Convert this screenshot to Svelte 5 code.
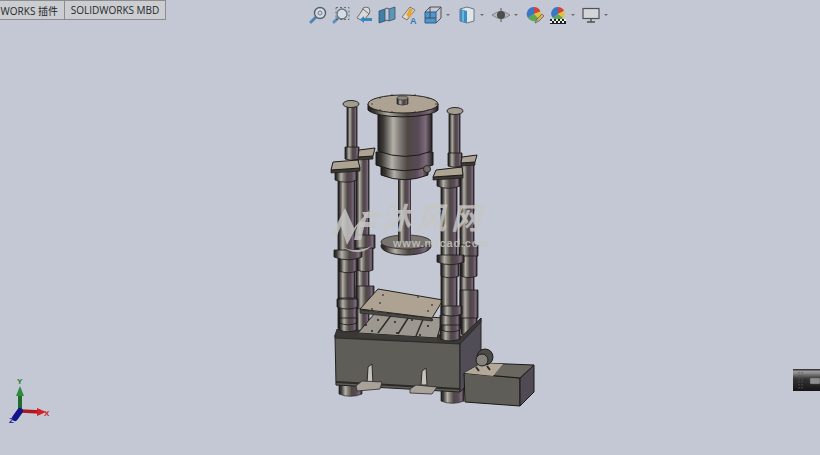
<script>
  // cylinder segments of the press: x, y, w, h
  const columns = [
    // back left
    [356, 157, 13, 180], [354, 235, 21, 13], [357, 248, 16, 22], [356, 286, 18, 22],
    // back right
    [460, 163, 14, 165], [459, 245, 19, 11], [461, 256, 16, 20], [460, 290, 18, 28], [461, 318, 16, 16],
    // upper rods
    [347, 107, 10, 42], [345, 147, 14, 12], [449, 114, 11, 42], [448, 153, 14, 13],
    // front left
    [338, 178, 17, 150], [335, 170, 22, 10], [339, 258, 18, 13], [339, 298, 18, 32],
    // front right
    [441, 185, 16, 140], [437, 176, 23, 10], [441, 263, 18, 13], [440, 315, 20, 24]
  ];
  const flanges = [
    [334, 250, 28, 7], [437, 255, 27, 7], [337, 299, 21, 8], [441, 306, 21, 8], [339, 318, 18, 5], [441, 325, 19, 5]
  ];
  // column-head blocks: top face, then the dark front lip
  const blocks = [
    ['359,150 375,148 373,156 358,157', '358,157 373,156 373,159 358,160'],
    ['462,157 477,155 475,162 461,163', '461,163 475,162 475,165 461,166'],
    ['333,162 358,160 360,168 331,170', '331,170 360,168 360,171 331,173'],
    ['436,170 462,167 463,175 433,177', '433,177 463,175 463,178 433,180']
  ];
  const bolts = [[372, 104], [380, 98], [392, 95], [415, 95], [428, 98], [436, 104], [428, 110], [415, 112], [392, 112], [380, 110]];
  const tableHoles = [[383, 295], [418, 297], [432, 305], [380, 303], [428, 311], [372, 309]];

  const cyl = (x, y, w, h) =>
    `M${x} ${y}L${x} ${y + h}Q${x + w / 2} ${y + h + w * 0.2} ${x + w} ${y + h}L${x + w} ${y}Z`;
</script>

<div class="page">
  <header class="topbar">
    <div class="tabs">
      <div class="tab first">WORKS 插件</div>
      <div class="tab">SOLIDWORKS MBD</div>
    </div>
    <div class="tools">
      <!-- zoom to fit -->
      <svg class="icon" viewBox="0 0 18 18"><path d="M7 11 2 16" stroke="#4f86b5" stroke-width="3" stroke-linecap="round"/><circle cx="11" cy="7" r="5.5" fill="#d5dbe0" stroke="#53626e" stroke-width="1.4"/><circle cx="11" cy="7" r="2" fill="none" stroke="#6d7a86"/></svg>
      <!-- zoom to area -->
      <svg class="icon" viewBox="0 0 18 18"><path d="M6 12 2 16" stroke="#5d8eb8" stroke-width="3" stroke-linecap="round"/><circle cx="10" cy="8" r="5" fill="#d5dde4" stroke="#66747f" stroke-width="1.3"/><rect x="4" y="1.5" width="13" height="12" fill="none" stroke="#555" stroke-dasharray="2 2" stroke-width=".8"/></svg>
      <!-- previous view -->
      <svg class="icon" viewBox="0 0 18 18"><circle cx="11" cy="5" r="4" fill="#d8dadc" stroke="#6b6f73"/><path d="M2 12 8 3l6 5-6 7Z" fill="#d8dadc" stroke="#6b6f73"/><path d="M9 12h8v3H9v2l-4-3.500L9 10Z" fill="#3c86c0"/></svg>
      <!-- section view -->
      <svg class="icon" viewBox="0 0 18 18"><path d="M1 5 7 3v12l-6 2Z" fill="#3f7fa5" stroke="#33566e" stroke-width=".8"/><path d="M11 3l6-2v12l-6 2Z" fill="#5f96b5" stroke="#33566e" stroke-width=".8"/><path d="M7 3q2-2 4 0M7 15q2-2 4 0" fill="none" stroke="#555"/></svg>
      <!-- dynamic annotation -->
      <svg class="icon" viewBox="0 0 18 18"><path d="M1 11 9 1l5 3-8 10Z" fill="#d9dadb" stroke="#777"/><path d="M5 9l4-7 3 2-2 3 2 1-6 5 1-3Z" fill="#e9a52e"/><text x="9" y="17.500" class="glyph">A</text></svg>
      <!-- view orientation -->
      <svg class="icon" viewBox="0 0 18 18"><path d="M1 6h11v11H1Z" fill="#4f96cc" stroke="#2d5f86"/><path d="M1 6l5-5h11v11l-5 5M12 6l5-5M6 1v11H1m5 0 6 0" fill="none" stroke="#444" stroke-width=".9"/></svg>
      <span class="caret"></span>
      <!-- display style -->
      <svg class="icon gap" viewBox="0 0 18 18"><path d="M2 3l7-2 7 2v12l-7 2-7-2Z" fill="#dfe6ea" stroke="#6b7680"/><path d="M2 3l7 2v12l-7-2Z" fill="#3f8cc0"/><path d="M5 4.500v11" stroke="#7fc0e6" stroke-width="1.500"/></svg>
      <span class="caret"></span>
      <!-- hide/show -->
      <svg class="icon gap" viewBox="0 0 18 18"><path d="M0 9q9-7 18 0-9 7-18 0Z" fill="#b5b9bd" stroke="#777" stroke-width=".8"/><circle cx="9" cy="9" r="4" fill="#4a4c4e"/><path d="M9 2v14" stroke="#555"/></svg>
      <span class="caret"></span>
      <!-- edit appearance -->
      <svg class="icon gap" viewBox="0 0 18 18"><path d="M8 8 8 1a7 7 0 0 1 6.500 4.500Z" fill="#d0443c"/><path d="M8 8 14.500 5.500A7 7 0 0 1 13 13Z" fill="#e3c23a"/><path d="M8 8 13 13A7 7 0 0 1 2 12Z" fill="#5aa94e"/><path d="M8 8 2 12A7 7 0 0 1 8 1Z" fill="#3a78c4"/><path d="M9 17l2-4 5-5 2 2-5 5Z" fill="#d8b060" stroke="#555" stroke-width=".7"/></svg>
      <!-- apply scene -->
      <svg class="icon" viewBox="0 0 18 18"><path d="M9 8 9 1a6.500 6.500 0 0 1 6 4Z" fill="#d0443c"/><path d="M9 8 15 5a6.500 6.500 0 0 1-1 7Z" fill="#e3c23a"/><path d="M9 8 14 12a6.500 6.500 0 0 1-10 0Z" fill="#5aa94e"/><path d="M9 8 4 12A6.500 6.500 0 0 1 9 1Z" fill="#3a78c4"/><path d="M1 13h16v5H1Z" fill="#1f1f1f"/><path d="M3 13h2v2H3ZM7 13h2v2H7ZM11 13h2v2h-2ZM15 13h2v2h-2ZM1 15h2v2H1ZM5 15h2v2H5ZM9 15h2v2H9ZM13 15h2v2h-2Z" fill="#eee"/></svg>
      <span class="caret"></span>
      <!-- view settings -->
      <svg class="icon monitor" viewBox="0 0 18 18"><rect x="1" y="2.500" width="16" height="10" fill="#d3d5d8" stroke="#4e5357" stroke-width="1.200"/><path d="M9 13v2.500M5 16h8" stroke="#4e5357" stroke-width="1.400"/></svg>
      <span class="caret"></span>
    </div>
  </header>

  <svg class="scene" viewBox="0 25 820 430" width="820" height="430">
    <defs>
      <linearGradient id="metal">
        <stop offset="0" stop-color="#1f1d1c"/>
        <stop offset=".1" stop-color="#3e3b39"/>
        <stop offset=".28" stop-color="#b5b1a9"/>
        <stop offset=".38" stop-color="#8a8580"/>
        <stop offset=".55" stop-color="#4e4844"/>
        <stop offset=".75" stop-color="#5a4a58"/>
        <stop offset=".88" stop-color="#7c6c7a"/>
        <stop offset="1" stop-color="#231f22"/>
      </linearGradient>
      <linearGradient id="nub" x1="0" x2="0" y1="0" y2="1">
        <stop offset="0" stop-color="#222"/>
        <stop offset=".12" stop-color="#a0a0a0"/>
        <stop offset=".45" stop-color="#333"/>
        <stop offset="1" stop-color="#151515"/>
      </linearGradient>
    </defs>

    <!-- back columns first, then base and tables -->
    {#each columns.slice(0, 9) as [x, y, w, h]}
      <path d={cyl(x, y, w, h)} fill="url(#metal)" stroke="#1c1a19" stroke-width=".8"/>
    {/each}

    <!-- feet -->
    <path d={cyl(339, 380, 23, 14)} fill="url(#metal)" stroke="#262422" stroke-width=".7"/>
    <path d={cyl(441, 386, 23, 15)} fill="url(#metal)" stroke="#262422" stroke-width=".7"/>

    <!-- base box -->
    <path d="M335 335 460 342 460 392 336 385Z" fill="#5f5d58" stroke="#232220"/>
    <path d="M460 342 481 318 481 370 460 392Z" fill="#514d56" stroke="#232220"/>
    <path d="M335 335 337 329 462 336 481 318 481 322 460 344 335 338Z" fill="#3a3835" stroke="#1f1e1c" stroke-width=".7"/>
    <path d="M336 382 460 389" stroke="#2b2a28" stroke-width="2"/>

    <!-- slotted plate -->
    <path d="M358 333 375 313 443 318 437 338Z" fill="#9c978f" stroke="#24231f"/>
    <path d="M358 333 437 338 437 342 358 337Z" fill="#3f3d3a"/>
    <path d="M378 333 392 314M398 334 410 315M416 336 424 317" stroke="#2f2e2b" stroke-width="1.500"/>
    {#each [[366, 325], [378, 320], [395, 322], [412, 320], [428, 326], [432, 320], [372, 331], [397, 333], [420, 335]] as [x, y]}
      <circle cx={x} cy={y} r="1" fill="#262523"/>
    {/each}

    <!-- table plate -->
    <path d="M360 310 432 318 432 321 360 313Z" fill="#4a4844" stroke="#232220" stroke-width=".7"/>
    <path d="M378 289 443 300 432 318 360 309Z" fill="#aea292" stroke="#232220"/>
    {#each tableHoles as [x, y]}
      <circle cx={x} cy={y} r="1" fill="#4a4844"/>
    {/each}

    <!-- front columns -->
    {#each columns.slice(9) as [x, y, w, h]}
      <path d={cyl(x, y, w, h)} fill="url(#metal)" stroke="#1c1a19" stroke-width=".8"/>
    {/each}
    {#each flanges as [x, y, w, h]}
      <path d={cyl(x, y, w, h)} fill="url(#metal)" stroke="#1a1918" stroke-width=".8"/>
    {/each}
    {#each blocks as [top, lip]}
      <polygon points={lip} fill="#3c3a37" stroke="#1c1a18" stroke-width=".7"/>
      <polygon points={top} fill="#ada393" stroke="#1c1a18" stroke-width="1"/>
    {/each}

    <!-- ram: rod, plate, cylinder, cap -->
    <rect x="398" y="178" width="13" height="60" fill="url(#metal)"/>
    <ellipse cx="406" cy="246" rx="25" ry="9" fill="url(#metal)" stroke="#2a2826"/>
    <ellipse cx="406" cy="242" rx="25" ry="7" fill="#7a746e" stroke="#2a2826" stroke-width=".8"/>
    <rect x="398" y="226" width="13" height="15" fill="url(#metal)"/>
    <path d={cyl(381, 166, 47, 9)} fill="url(#metal)" stroke="#1c1a18"/>
    <path d={cyl(376, 152, 57, 13)} fill="url(#metal)" stroke="#1c1a18"/>
    <path d={cyl(378, 114, 54, 37)} fill="url(#metal)" stroke="#1c1a18"/>
    <circle cx="427" cy="169" r="3.500" fill="#716c68" stroke="#2b2927"/>
    <path d="M368 104V110A36 9 0 0 0 438 110V104Z" fill="url(#metal)" stroke="#1c1a18"/>
    <ellipse cx="403" cy="104" rx="35" ry="9" fill="#aea292" stroke="#24221f"/>
    {#each bolts as [x, y]}
      <circle cx={x} cy={y} r=".8" fill="#3a3835"/>
    {/each}
    <path d={cyl(397, 98, 11, 6)} fill="url(#metal)" stroke="#2b2926" stroke-width=".7"/>
    <ellipse cx="402.500" cy="98" rx="5.500" ry="2" fill="#8e8981" stroke="#2b2926" stroke-width=".6"/>

    <!-- post heads -->
    <ellipse cx="351" cy="104" rx="8" ry="3.500" fill="#a39c90" stroke="#2a2826"/>
    <ellipse cx="455" cy="111" rx="8" ry="3.500" fill="#a39c90" stroke="#2a2826"/>

    <!-- hooks on the base -->
    <path d="M367 384 368 367 372 364 373 384Z" fill="#c5c2bc" stroke="#2b2a28"/>
    <path d="M356 386 362 381 382 382 380 389 357 391Z" fill="#a8a29a" stroke="#2b2a28" stroke-width=".8"/>
    <path d="M421 385 422 371 426 368 427 385Z" fill="#c5c2bc" stroke="#2b2a28"/>
    <path d="M410 389 416 385 437 387 432 394 410 393Z" fill="#a8a29a" stroke="#2b2a28" stroke-width=".8"/>

    <!-- motor box -->
    <path d="M464 373 520 378 520 406 465 402Z" fill="#5f5d58" stroke="#1a1918"/>
    <path d="M520 378 534 365 534 392 520 406Z" fill="#4f4a54" stroke="#1a1918"/>
    <path d="M464 373 482 363 534 365 520 378Z" fill="#6a6660" stroke="#1a1918"/>
    <path d="M464 373 482 363 503 364 493 376Z" fill="#b4a999"/>
    <circle cx="485" cy="357" r="8" fill="#4c4b48" stroke="#1c1c1c"/>
    <circle cx="482" cy="360" r="6" fill="#85827c" stroke="#1c1c1c"/>
    <path d="M476 367 479 371M487 366 490 370" stroke="#2b2b2b" stroke-width="2"/>

    <!-- watermark -->
    <g class="mark">
      <path d="M331 236 345 208 354 228 370 209 367 215 361 240 354 240 357 226 347 245 341 226 336 238Z"/>
      <path d="M362 212H382L380 218H365ZM361 222H377L375 227H359Z"/>
      <path d="M341 246Q354 254 372 246 358 258 341 246Z"/>
      <text x="381" y="229" class="mark-cn">沐风网</text>
      <text x="393" y="247" class="mark-url">www.mfcad.com</text>
    </g>

    <!-- triad -->
    <path d="M20 411V391" stroke="#1f6b2a" stroke-width="4"/>
    <path d="M20 386 24 396H16Z" fill="#2f8a3c"/>
    <path d="M21 411 41 412" stroke="#b0191c" stroke-width="3.500"/>
    <path d="M46 412 37 408V416Z" fill="#d42024"/>
    <path d="M20 411 15 418" stroke="#14148a" stroke-width="6" stroke-linecap="round"/>
    <text x="17" y="384" class="axis y">Y</text>
    <text x="44" y="416" class="axis x">X</text>
    <text x="9" y="423" class="axis z">Z</text>

    <!-- side flyout -->
    <rect x="793" y="369" width="27" height="22" fill="url(#nub)"/>
    <path d="M799 372v17M802 372v17" stroke="#555" stroke-dasharray="1.500 1.500"/>
    <rect x="810" y="378" width="10" height="6" rx="1" fill="#8e8e8e" stroke="#555" stroke-width=".5"/>
  </svg>
</div>

<style>
  :global(body) {
    background: #c3c8d4;
  }

  .page {
    width: 820px;
    height: 455px;
    overflow: hidden;
    background: #c3c8d4;
    font-family: "Open Sans", "Noto Sans CJK SC", sans-serif;
  }

  .topbar {
    display: flex;
    height: 25px;
  }

  .tabs {
    display: flex;
    height: 20px;
    border-top: 1px solid #8b8c90;
    border-bottom: 1px solid #8b8c90;
    box-sizing: border-box;
    flex: none;
  }

  .tab {
    width: 100px;
    display: flex;
    align-items: center;
    justify-content: center;
    font-size: 10px;
    color: #26282c;
    background: #cbcdd1;
    border-right: 1px solid #8b8c90;
    white-space: nowrap;
    overflow: hidden;
  }

  .first {
    width: 65px;
    justify-content: flex-end;
    padding-right: 6px;
    box-sizing: border-box;
  }

  .tools {
    display: flex;
    align-items: center;
    gap: 5px;
    margin-left: 143px;
    height: 30px;
  }

  .icon {
    width: 18px;
    height: 18px;
    flex: none;
  }

  .gap {
    margin-left: 3px;
  }

  .monitor {
    margin-left: 2px;
  }

  .caret {
    width: 0;
    height: 0;
    flex: none;
    margin-left: -1px;
    border-left: 2px solid transparent;
    border-right: 2px solid transparent;
    border-top: 2px solid #6a6d72;
  }

  .glyph {
    font: bold 9px "Liberation Sans", sans-serif;
    fill: #3c78b0;
  }

  .scene {
    display: block;
  }

  .mark {
    fill: #c6c6c4;
    fill-opacity: 0.85;
  }

  .mark-cn {
    font: italic bold 30px "Noto Sans CJK SC", sans-serif;
    letter-spacing: 5px;
  }

  .mark-url {
    font: bold 11px "Liberation Sans", sans-serif;
    letter-spacing: 0.8px;
  }

  .axis {
    font: bold 8px "Liberation Sans", sans-serif;
  }

  .y { fill: #1f7a30; }
  .x { fill: #d42024; }
  .z { fill: #1a1aa0; }
</style>
